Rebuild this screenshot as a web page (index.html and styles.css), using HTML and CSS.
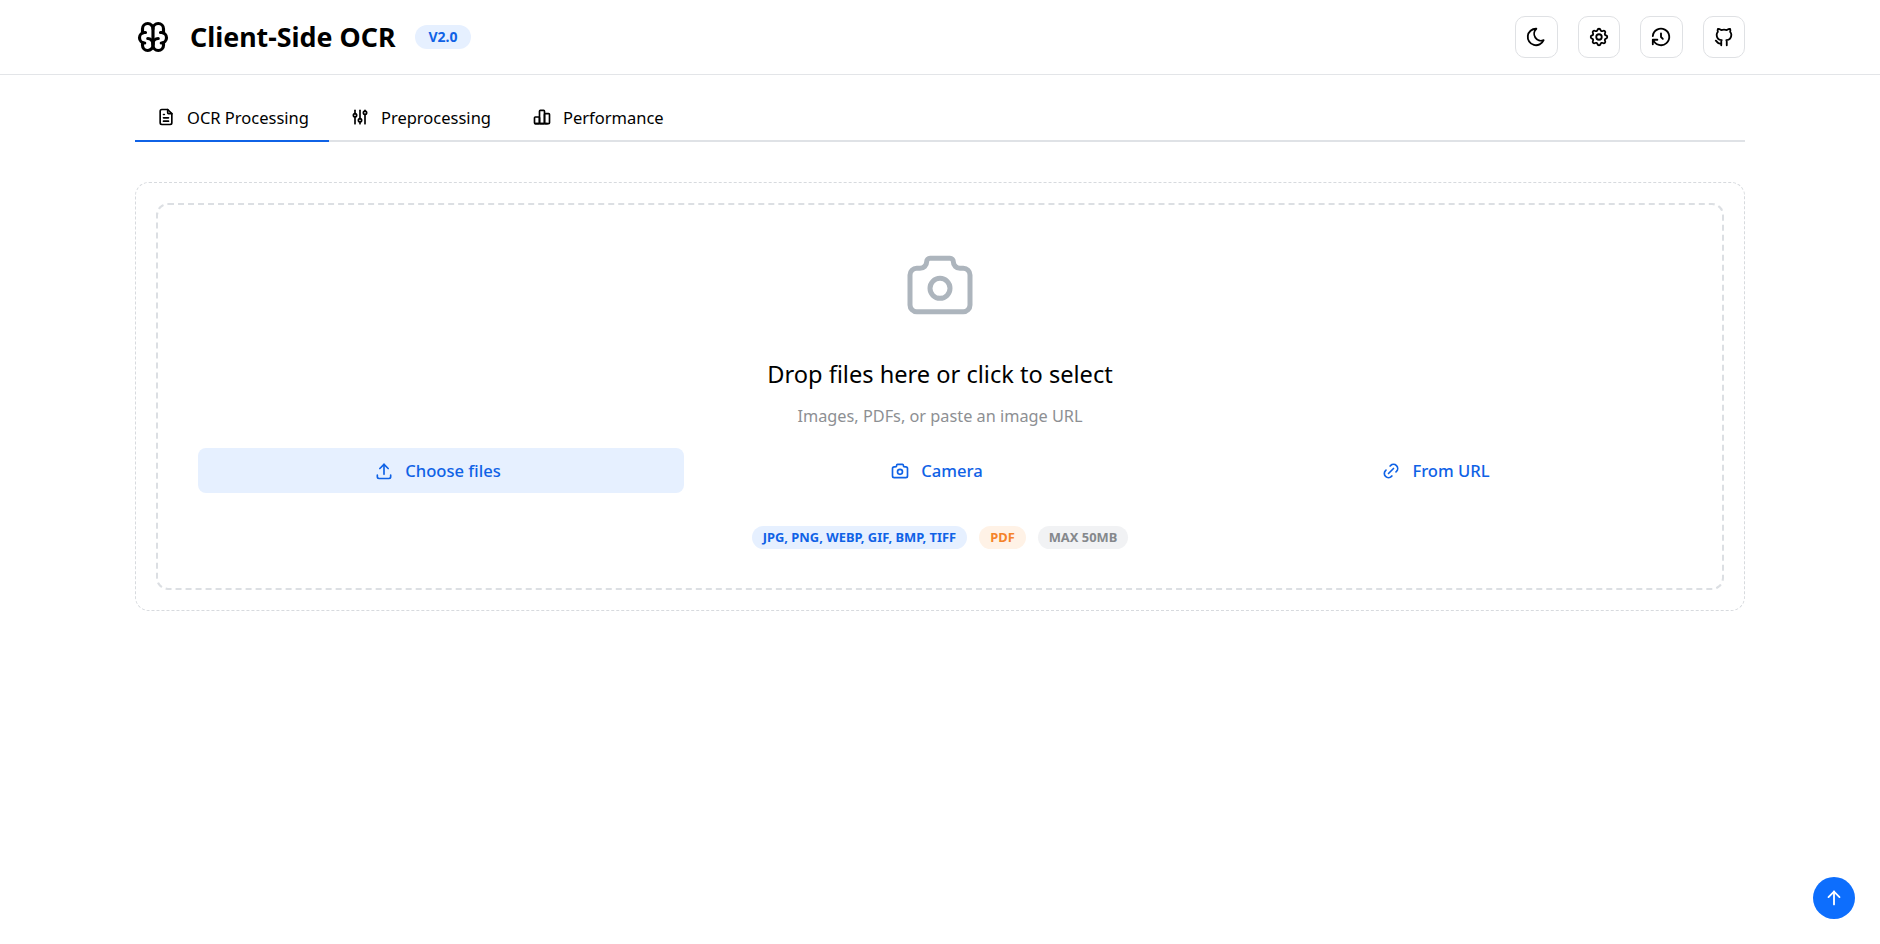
FILE: index.html
```html
<!DOCTYPE html>
<html lang="en">
<head>
<meta charset="utf-8">
<title>Client-Side OCR</title>
<link rel="stylesheet" href="styles.css">
</head>
<body>
<header class="header">
  <div class="wrap header-row">
    <div class="brand">
      <svg class="brand-icon" viewBox="0 0 24 24"><path d="M15.500 13a3.500 3.500 0 0 0-3.500 3.500v1a3.500 3.500 0 0 0 7 0v-1.800"/><path d="M8.500 13a3.500 3.500 0 0 1 3.500 3.500v1a3.500 3.500 0 0 1-7 0v-1.800"/><path d="M17.500 16a3.500 3.500 0 0 0 0-7h-.5"/><path d="M19 9.300v-2.800a3.500 3.500 0 0 0-7 0"/><path d="M6.500 16a3.500 3.500 0 0 1 0-7h.5"/><path d="M5 9.300v-2.800a3.500 3.500 0 0 1 7 0v10"/></svg>
      <h1 class="title">Client-Side OCR</h1>
      <span class="version">V2.0</span>
    </div>
    <div class="actions">
      <button class="icon-btn"><svg class="i22" viewBox="0 0 24 24"><path d="M12 3c.132 0 .263 0 .393 0a7.500 7.500 0 0 0 7.920 12.446a9 9 0 1 1-8.313-12.454z"/></svg></button>
      <button class="icon-btn"><svg class="i22" viewBox="0 0 24 24"><path d="M10.325 4.317c.426-1.756 2.924-1.756 3.350 0a1.724 1.724 0 0 0 2.573 1.066c1.543-.940 3.310 .826 2.370 2.370a1.724 1.724 0 0 0 1.065 2.572c1.756 .426 1.756 2.924 0 3.350a1.724 1.724 0 0 0-1.066 2.573c.940 1.543-.826 3.310-2.370 2.370a1.724 1.724 0 0 0-2.572 1.065c-.426 1.756-2.924 1.756-3.350 0a1.724 1.724 0 0 0-2.573-1.066c-1.543 .940-3.310-.826-2.370-2.370a1.724 1.724 0 0 0-1.065-2.572c-1.756-.426-1.756-2.924 0-3.350a1.724 1.724 0 0 0 1.066-2.573c-.940-1.543 .826-3.310 2.370-2.370c1 .608 2.296 .070 2.572-1.065z"/><path d="M9 12a3 3 0 1 0 6 0a3 3 0 0 0-6 0"/></svg></button>
      <button class="icon-btn"><svg class="i22" viewBox="0 0 24 24"><path d="M12 8v4l2 2"/><path d="M3.050 11a9 9 0 1 1 .5 4m-.5 5v-5h5"/></svg></button>
      <button class="icon-btn"><svg class="i22" viewBox="0 0 24 24"><path d="M9 19c-4.300 1.400-4.300-2.500-6-3m12 5v-3.500c0-1 .1-1.400-.5-2c2.800-.3 5.500-1.400 5.500-6a4.600 4.600 0 0 0-1.300-3.200a4.200 4.200 0 0 0-.1-3.200s-1.100-.3-3.500 1.300a12.300 12.300 0 0 0-6.200 0c-2.400-1.600-3.500-1.300-3.500-1.300a4.200 4.200 0 0 0-.1 3.200a4.600 4.600 0 0 0-1.300 3.200c0 4.600 2.700 5.700 5.500 6c-.6 .6-.6 1.200-.5 2v3.500"/></svg></button>
    </div>
  </div>
</header>

<main class="wrap">
  <nav class="tabs">
    <a class="tab tab-active"><svg class="i20" viewBox="0 0 24 24"><path d="M14 3v4a1 1 0 0 0 1 1h4"/><path d="M17 21h-10a2 2 0 0 1-2-2v-14a2 2 0 0 1 2-2h7l5 5v11a2 2 0 0 1-2 2z"/><path d="M9 9h1"/><path d="M9 13h6"/><path d="M9 17h6"/></svg>OCR Processing</a>
    <a class="tab"><svg class="i20" viewBox="0 0 24 24"><path d="M4 10a2 2 0 1 0 4 0a2 2 0 0 0-4 0"/><path d="M6 4v4"/><path d="M6 12v8"/><path d="M10 16a2 2 0 1 0 4 0a2 2 0 0 0-4 0"/><path d="M12 4v10"/><path d="M12 18v2"/><path d="M16 7a2 2 0 1 0 4 0a2 2 0 0 0-4 0"/><path d="M18 4v1"/><path d="M18 9v11"/></svg>Preprocessing</a>
    <a class="tab"><svg class="i20" viewBox="0 0 24 24"><path d="M3 13a1 1 0 0 1 1-1h4a1 1 0 0 1 1 1v6a1 1 0 0 1-1 1h-4a1 1 0 0 1-1-1z"/><path d="M15 9a1 1 0 0 1 1-1h4a1 1 0 0 1 1 1v10a1 1 0 0 1-1 1h-4a1 1 0 0 1-1-1z"/><path d="M9 5a1 1 0 0 1 1-1h4a1 1 0 0 1 1 1v14a1 1 0 0 1-1 1h-4a1 1 0 0 1-1-1z"/><path d="M4 20h14"/></svg>Performance</a>
  </nav>

  <section class="card">
    <div class="drop">
      <svg class="hero-icon" viewBox="0 0 24 24"><path d="M5 7h1a2 2 0 0 0 2-2a1 1 0 0 1 1-1h6a1 1 0 0 1 1 1a2 2 0 0 0 2 2h1a2 2 0 0 1 2 2v9a2 2 0 0 1-2 2h-14a2 2 0 0 1-2-2v-9a2 2 0 0 1 2-2"/><path d="M9 13a3 3 0 1 0 6 0a3 3 0 0 0-6 0"/></svg>
      <p class="drop-title">Drop files here or click to select</p>
      <p class="drop-sub">Images, PDFs, or paste an image URL</p>
      <div class="buttons">
        <button class="src-btn src-btn-primary"><svg class="i20" viewBox="0 0 24 24"><path d="M4 17v2a2 2 0 0 0 2 2h12a2 2 0 0 0 2-2v-2"/><path d="M7 9l5-5l5 5"/><path d="M12 4v12"/></svg>Choose files</button>
        <button class="src-btn"><svg class="i20" viewBox="0 0 24 24"><path d="M5 7h1a2 2 0 0 0 2-2a1 1 0 0 1 1-1h6a1 1 0 0 1 1 1a2 2 0 0 0 2 2h1a2 2 0 0 1 2 2v9a2 2 0 0 1-2 2h-14a2 2 0 0 1-2-2v-9a2 2 0 0 1 2-2"/><path d="M9 13a3 3 0 1 0 6 0a3 3 0 0 0-6 0"/></svg>Camera</button>
        <button class="src-btn"><svg class="i20" viewBox="0 0 24 24"><path d="M9 15l6-6"/><path d="M11 6l.463-.536a5 5 0 0 1 7.071 7.072l-.534 .464"/><path d="M13 18l-.397 .534a5.068 5.068 0 0 1-7.127 0a4.972 4.972 0 0 1 0-7.071l.524-.463"/></svg>From URL</button>
      </div>
      <div class="badges">
        <span class="badge badge-blue">JPG, PNG, WEBP, GIF, BMP, TIFF</span>
        <span class="badge badge-orange">PDF</span>
        <span class="badge badge-gray">MAX 50MB</span>
      </div>
    </div>
  </section>
</main>

<button class="to-top"><svg class="i22" viewBox="0 0 24 24"><path d="M12 5v14"/><path d="M18 11l-6-6"/><path d="M6 11l6-6"/></svg></button>
</body>
</html>
```
FILE: styles.css
```css
* { box-sizing: border-box; }
html, body { margin: 0; padding: 0; }
body {
  background: #fff;
  color: #000;
  font-family: "Noto Sans", "Open Sans", sans-serif;
  height: 944px;
  overflow: hidden;
}
svg {
  fill: none;
  stroke: currentColor;
  stroke-width: 2;
  stroke-linecap: round;
  stroke-linejoin: round;
  flex: none;
}
.i20 { width: 20px; height: 20px; }
.i22 { width: 22px; height: 22px; }
.wrap { width: 1610px; margin: 0 auto; }
.header { height: 75px; border-bottom: 1px solid #e3e5e8; }
.header-row { height: 74px; display: flex; align-items: center; justify-content: space-between; }
.brand { display: flex; align-items: center; }
.brand-icon { width: 36px; height: 36px; margin-right: 19px; stroke-width: 2.100; }
.title { margin: 0; font-size: 26.800px; font-weight: 700; line-height: 34px; }
.version {
  margin-left: 20px;
  height: 24px;
  padding: 0 13px;
  border-radius: 12px;
  background: #e6f0ff;
  color: #0f62e6;
  font-size: 14px;
  font-weight: 700;
  line-height: 24px;
}
.actions { display: flex; gap: 20px; }
.icon-btn {
  width: 42.500px;
  height: 42px;
  padding: 0;
  display: flex;
  align-items: center;
  justify-content: center;
  background: #fff;
  color: #000;
  border: 1px solid #dfe1e4;
  border-radius: 10px;
}
.tabs { display: flex; height: 67px; padding-top: 26px; border-bottom: 2px solid #dfe2e6; }
.tab {
  display: flex;
  align-items: center;
  gap: 11px;
  height: 41px;
  padding: 0 20px 9px 21px;
  font-size: 16.500px;
  color: #000;
}
.tab-active { box-shadow: inset 0 -2px 0 #0f62e6; }
.card {
  margin-top: 40px;
  height: 429px;
  padding: 20px;
  border: 1px dashed #d7dade;
  border-radius: 14px;
}
.drop {
  height: 387px;
  padding: 48px 40px 0;
  border: 2px dashed #dcdfe3;
  border-radius: 12px;
  display: flex;
  flex-direction: column;
  align-items: center;
}
.hero-icon { width: 80px; height: 80px; color: #adb5bd; margin-top: -8px; stroke-width: 1.500; }
.drop-title { margin: 32px 0 0; font-size: 23.600px; line-height: 34px; }
.drop-sub { margin: 13px 0 0; font-size: 16.300px; line-height: 24px; color: #8d8f93; }
.buttons {
  margin-top: 20px;
  width: 100%;
  display: grid;
  grid-template-columns: repeat(3, 1fr);
  gap: 13px;
}
.src-btn {
  height: 45px;
  padding: 0 7px 0 0;
  display: flex;
  align-items: center;
  justify-content: center;
  gap: 11px;
  background: transparent;
  border: 0;
  border-radius: 8px;
  color: #0f62e6;
  font-family: inherit;
  font-size: 16.600px;
  font-weight: 500;
}
.src-btn-primary { background: #e6f0ff; }
.badges { margin-top: 33px; display: flex; gap: 12px; }
.badge {
  height: 23px;
  padding: 0 11px;
  border-radius: 12px;
  font-size: 12.900px;
  font-weight: 700;
  line-height: 23px;
}
.badge-blue { background: #e6f0ff; color: #0f62e6; }
.badge-orange { background: #fff2e6; color: #f5832a; }
.badge-gray { background: #f1f2f4; color: #85888c; }
.to-top {
  position: fixed;
  right: 25px;
  bottom: 25px;
  width: 42px;
  height: 42px;
  padding: 0;
  display: flex;
  align-items: center;
  justify-content: center;
  border: 0;
  border-radius: 50%;
  background: #0d6efd;
  color: #fff;
}
```
